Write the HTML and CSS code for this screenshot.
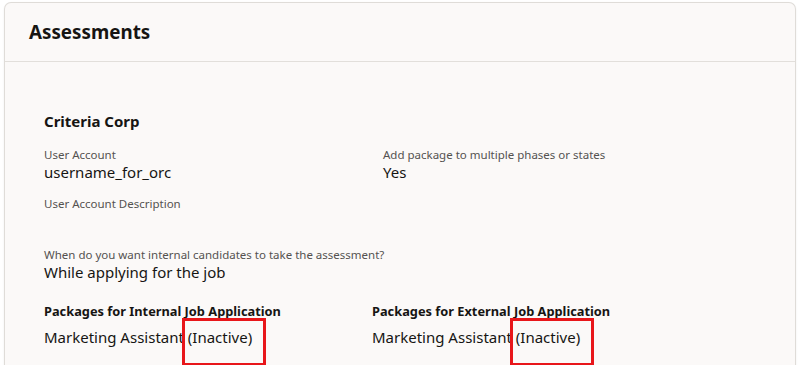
FILE: index.html
```html
<!DOCTYPE html>
<html>
<head>
<meta charset="utf-8">
<link rel="stylesheet" href="styles.css">
</head>
<body>
<div class="card">
  <div class="card-header"><h1 class="title">Assessments</h1></div>
  <div class="card-body">
    <h2 class="section">Criteria Corp</h2>
    <div class="grid">
      <div class="field">
        <div class="label">User Account</div>
        <div class="value">username_for_orc</div>
      </div>
      <div class="field">
        <div class="label">Add package to multiple phases or states</div>
        <div class="value">Yes</div>
      </div>
      <div class="field">
        <div class="label">User Account Description</div>
        <div class="value empty"></div>
      </div>
    </div>
    <div class="field wide">
      <div class="label">When do you want internal candidates to take the assessment?</div>
      <div class="value">While applying for the job</div>
    </div>
    <div class="packages">
      <div class="pkg">
        <div class="pkg-title">Packages for Internal Job Application</div>
        <div class="value">Marketing Assistant <span class="mark">(Inactive)</span></div>
      </div>
      <div class="pkg">
        <div class="pkg-title">Packages for External Job Application</div>
        <div class="value">Marketing Assistant <span class="mark">(Inactive)</span></div>
      </div>
    </div>
  </div>
</div>
</body>
</html>
```

FILE: styles.css
```css
* { box-sizing: border-box; }
html, body { margin: 0; padding: 0; background: #ffffff; }
body {
  font-family: "Noto Sans", "Open Sans", sans-serif;
  color: #161513;
  padding: 2px 4px 0 4px;
  height: 365px;
  overflow: hidden;
}
.card {
  background: #fbf9f8;
  border: 1px solid #dfdcd8;
  border-bottom: none;
  border-radius: 7px 7px 0 0;
  box-shadow: 0 1px 2px rgba(0,0,0,0.08);
  height: 363px;
}
.card-header {
  height: 59px;
  border-bottom: 1px solid #e2dfdb;
  padding: 0 0 0 24px;
  display: flex;
  align-items: center;
}
.title {
  margin: 0;
  font-size: 18.8px;
  font-weight: 700;
  line-height: 24px;
}
.card-body {
  padding: 49px 0 0 39px;
}
.section {
  margin: 0 0 16px 0;
  font-size: 15px;
  font-weight: 700;
  line-height: 20px;
}
.grid {
  display: grid;
  grid-template-columns: 339px 1fr;
  row-gap: 14px;
}
.label {
  font-size: 11.5px;
  line-height: 15px;
  color: #545250;
}
.value {
  font-size: 15px;
  line-height: 20px;
  color: #161513;
}
.value.empty { height: 20px; }
.wide { margin-top: 16px; }
.packages {
  display: grid;
  grid-template-columns: 328px 1fr;
  margin-top: 20px;
}
.pkg-title {
  font-size: 12.8px;
  font-weight: 700;
  line-height: 18px;
  margin-bottom: 7px;
}
.mark {
  position: relative;
}
.mark::after {
  content: "";
  position: absolute;
  left: -6px;
  top: -9px;
  width: 78px;
  height: 42px;
  border: 3px solid #e8161a;
}
```
